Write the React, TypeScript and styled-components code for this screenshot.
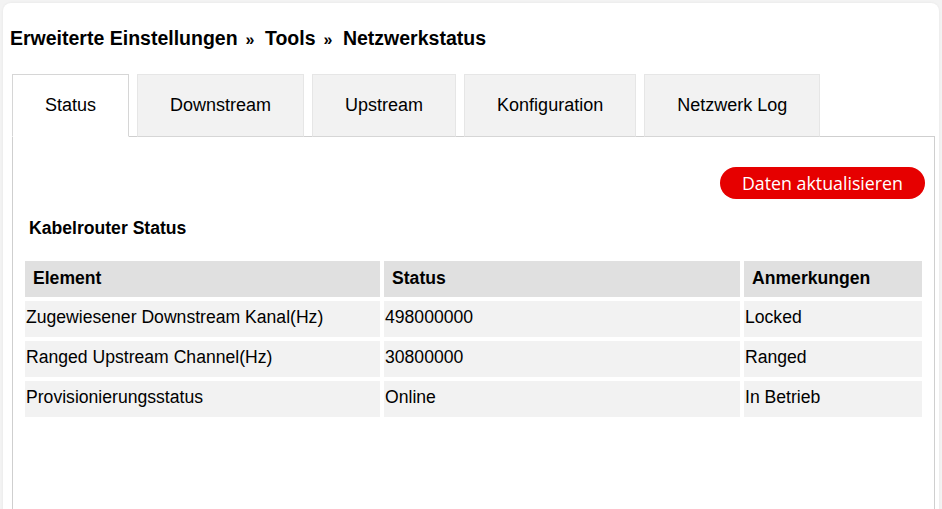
import React from "react";
import styled, { createGlobalStyle } from "styled-components";

const Global = createGlobalStyle`
  html, body { margin: 0; padding: 0; background: #f3f3f3; }
  body { font-family: "Liberation Sans", Arial, sans-serif; color: #000; }
`;

const Card = styled.div`
  margin: 3px 3px 0 3px;
  background: #fff;
  border-radius: 8px 8px 0 0;
  box-shadow: 0 0 3px rgba(0, 0, 0, 0.06);
  padding: 25px 5px 0 7px;
  height: 520px;
  box-sizing: border-box;
`;

const Breadcrumb = styled.h1`
  margin: 0 0 24px 0;
  font-size: 19.5px;
  line-height: 20px;
  font-weight: bold;
  display: flex;
  gap: 7px;
  align-items: baseline;
`;

const Sep = styled.span`
  font-size: 16px;
  margin-left: 1px;
  margin-right: 3.5px;
`;

const TabBar = styled.div`
  display: flex;
  gap: 8px;
  padding-left: 2px;
  position: relative;
  z-index: 1;
`;

const Tab = styled.div<{ $active?: boolean }>`
  height: 63px;
  box-sizing: border-box;
  padding: 0 32px 1px;
  display: flex;
  align-items: center;
  justify-content: center;
  font-size: 18px;
  background: ${(p) => (p.$active ? "#fff" : "#f2f2f2")};
  border: 1px solid ${(p) => (p.$active ? "#d6d6d6" : "#e6e6e6")};
  border-bottom: ${(p) => (p.$active ? "1px solid #fff" : "1px solid #d6d6d6")};
  margin-bottom: -1px;
`;

const Panel = styled.div`
  margin-left: 2px;
  border: 1px solid #cfcfcf;
  padding: 30px 8px 0 8px;
  height: 400px;
  box-sizing: border-box;
  width: 923px;
`;

const ButtonRow = styled.div`
  display: flex;
  justify-content: flex-end;
  padding-right: 1px;
`;

const RedButton = styled.button`
  height: 32px;
  padding: 0 22px;
  border: none;
  border-radius: 16px;
  background: #e60000;
  color: #fff;
  font-family: "Open Sans", sans-serif;
  font-size: 17.8px;
  cursor: pointer;
`;

const SectionTitle = styled.h2`
  margin: 19px 0 0 8px;
  font-size: 17.6px;
  font-weight: bold;
  line-height: 20px;
`;

const Table = styled.table`
  margin-top: 19px;
  width: 905px;
  table-layout: fixed;
  border-collapse: separate;
  border-spacing: 4px;
  font-size: 17.6px;
`;

const Th = styled.th<{ $w: number }>`
  box-sizing: border-box;
  width: ${(p) => p.$w}px;
  height: 36px;
  background: #e0e0e0;
  text-align: left;
  padding: 0 8px 2px;
  font-weight: bold;
`;

const Td = styled.td`
  box-sizing: border-box;
  height: 36px;
  background: #f2f2f2;
  padding: 0 1px 3px;
  white-space: nowrap;
`;

const rows = [
  ["Zugewiesener Downstream Kanal(Hz)", "498000000", "Locked"],
  ["Ranged Upstream Channel(Hz)", "30800000", "Ranged"],
  ["Provisionierungsstatus", "Online", "In Betrieb"],
];

export default function App() {
  return (
    <>
      <Global />
      <Card>
        <Breadcrumb>
          <span>Erweiterte Einstellungen</span>
          <Sep>»</Sep>
          <span>Tools</span>
          <Sep>»</Sep>
          <span>Netzwerkstatus</span>
        </Breadcrumb>
        <TabBar>
          <Tab $active>Status</Tab>
          <Tab>Downstream</Tab>
          <Tab>Upstream</Tab>
          <Tab>Konfiguration</Tab>
          <Tab>Netzwerk Log</Tab>
        </TabBar>
        <Panel>
          <ButtonRow>
            <RedButton>Daten aktualisieren</RedButton>
          </ButtonRow>
          <SectionTitle>Kabelrouter Status</SectionTitle>
          <Table>
            <thead>
              <tr>
                <Th $w={355}>Element</Th>
                <Th $w={356}>Status</Th>
                <Th $w={178}>Anmerkungen</Th>
              </tr>
            </thead>
            <tbody>
              {rows.map((r) => (
                <tr key={r[0]}>
                  {r.map((c) => (
                    <Td key={c}>{c}</Td>
                  ))}
                </tr>
              ))}
            </tbody>
          </Table>
        </Panel>
      </Card>
    </>
  );
}
